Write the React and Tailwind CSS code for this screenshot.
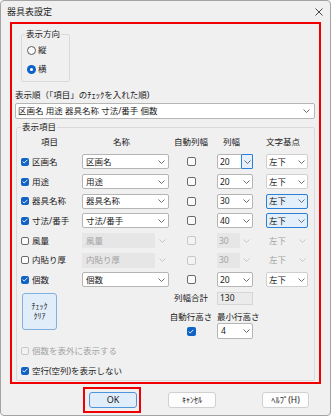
import React from "react";

function Chevron({ disabled }) {
  return (
    <svg width="7" height="4" viewBox="0 0 7 4" className="block">
      <polyline
        points="0.5,0.5 3.5,3.5 6.5,0.5"
        fill="none"
        stroke={disabled ? "#c2c2c2" : "#5f5f5f"}
        strokeWidth="0.9"
      />
    </svg>
  );
}

function Check({ checked, disabled, big }) {
  const size = big ? "w-[9px] h-[9px]" : "w-[8px] h-[8px]";
  if (checked) {
    return (
      <span className={`${size} shrink-0 rounded-[2px] bg-[#0f62c6] flex items-center justify-center`}>
        <svg width="6" height="5" viewBox="0 0 6 5" className="block">
          <polyline points="0.6,2.6 2.2,4 5.4,0.8" fill="none" stroke="#ffffff" strokeWidth="0.9" />
        </svg>
      </span>
    );
  }
  return (
    <span
      className={`${size} shrink-0 rounded-[2px] border ${
        disabled ? "border-[#c8c8c8] bg-[#f3f3f3]" : "border-[#6a6a6a] bg-[#fbfbfb]"
      }`}
    />
  );
}

function Radio({ checked }) {
  if (checked) {
    return (
      <span className="w-[9px] h-[9px] shrink-0 rounded-full bg-[#0f62c6] flex items-center justify-center">
        <span className="w-[3px] h-[3px] rounded-full bg-white" />
      </span>
    );
  }
  return <span className="w-[9px] h-[9px] shrink-0 rounded-full border border-[#5c5c5c] bg-[#fafafa]" />;
}

const rows = [
  { label: "区画名", on: true, name: "区画名", w: "20", base: "左下", wFocus: true },
  { label: "用途", on: true, name: "用途", w: "20", base: "左下" },
  { label: "器具名称", on: true, name: "器具名称", w: "30", base: "左下", baseHi: true },
  { label: "寸法/番手", on: true, name: "寸法/番手", w: "40", base: "左下", baseHi: true },
  { label: "風量", on: false, dis: true, name: "風量", w: "30", base: "左下" },
  { label: "内貼り厚", on: false, dis: true, name: "内貼り厚", w: "30", base: "左下" },
  { label: "個数", on: true, name: "個数", w: "20", base: "左下" },
];

function NameCombo({ r }) {
  if (r.dis) {
    return (
      <div className="w-[87px] h-[15px] flex items-stretch">
        <div className="flex-1 bg-[#e6e6e6] flex items-center pl-[4px] text-[#a3a3a3]">{r.name}</div>
        <div className="w-[14px] flex items-center justify-center">
          <Chevron disabled />
        </div>
      </div>
    );
  }
  return (
    <div className="w-[87px] h-[15px] bg-white border border-[#b5b5b5] rounded-[2px] flex items-center">
      <div className="flex-1 pl-[3px]">{r.name}</div>
      <div className="w-[13px] flex items-center justify-center">
        <Chevron />
      </div>
    </div>
  );
}

function WidthCombo({ r }) {
  if (r.dis) {
    return (
      <div className="ml-[4px] w-[36px] h-[15px] flex items-stretch">
        <div className="w-[23px] bg-[#e6e6e6] flex items-center pl-[2px] text-[#a3a3a3]">{r.w}</div>
        <div className="flex-1 flex items-center justify-center">
          <Chevron disabled />
        </div>
      </div>
    );
  }
  return (
    <div className="ml-[4px] w-[36px] h-[15px] bg-white border border-[#b5b5b5] rounded-[2px] flex items-stretch">
      <div className="flex-1 pl-[2px] flex items-center">{r.w}</div>
      {r.wFocus ? (
        <div className="w-[12px] -my-px -mr-px border border-[#2a7fd6] bg-[#e5f0fb] rounded-[1px] flex items-center justify-center">
          <Chevron />
        </div>
      ) : (
        <div className="w-[12px] flex items-center justify-center">
          <Chevron />
        </div>
      )}
    </div>
  );
}

function BaseCombo({ r }) {
  if (r.dis) {
    return (
      <div className="ml-[13px] w-[42px] h-[15px] flex items-center text-[#a3a3a3]">
        <div className="flex-1 pl-[3px]">{r.base}</div>
        <div className="w-[12px] flex items-center justify-center">
          <Chevron disabled />
        </div>
      </div>
    );
  }
  return (
    <div
      className={`ml-[13px] w-[42px] h-[15px] rounded-[2px] border flex items-center ${
        r.baseHi ? "bg-[#e3effb] border-[#2a7fd6]" : "bg-white border-[#cfcfcf]"
      }`}
    >
      <div className="flex-1 pl-[2px]">{r.base}</div>
      <div className="w-[12px] flex items-center justify-center">
        <Chevron />
      </div>
    </div>
  );
}

export default function App() {
  return (
    <div className="w-[332px] h-[420px] bg-white font-['Noto_Sans','Noto_Sans_CJK_JP',sans-serif] text-[8.5px] leading-[12px] text-[#1a1a1a]">
      <div className="w-[331px] h-[416px] border border-[#a3a3a3] rounded-[4px] bg-[#f0f0f0] flex flex-col">
        {/* title bar */}
        <div className="h-[21px] shrink-0 flex items-center justify-between pl-[6px] pr-[7px]">
          <span className="text-[9px]">器具表設定</span>
          <svg width="8" height="8" viewBox="0 0 8 8" className="block">
            <line x1="0.5" y1="0.5" x2="7.5" y2="7.5" stroke="#333" strokeWidth="0.9" />
            <line x1="7.5" y1="0.5" x2="0.5" y2="7.5" stroke="#333" strokeWidth="0.9" />
          </svg>
        </div>

        {/* red frame */}
        <div className="ml-[9px] w-[311px] h-[362px] shrink-0 border-2 border-[#f00000] flex flex-col">
          {/* 表示方向 */}
          <fieldset className="ml-[9px] mt-[4px] w-[49px] border border-[#d9d9d9] rounded-[2px] pb-[5px]">
            <legend className="ml-[3px] px-[1px] leading-[12px]">表示方向</legend>
            <div className="mt-[3px] h-[14px] flex items-center pl-[5px] gap-[2px]">
              <Radio />
              <span>縦</span>
            </div>
            <div className="mt-[5px] h-[14px] flex items-center pl-[5px] gap-[2px]">
              <Radio checked />
              <span>横</span>
            </div>
          </fieldset>

          <div className="mt-[7px] h-[12px] pl-[3px] whitespace-nowrap">表示順（「項目」のﾁｪｯｸを入れた順)</div>

          <div className="mt-[2px] ml-[3px] mr-[4px] h-[16px] bg-white border border-[#b5b5b5] rounded-[2px] flex items-center">
            <div className="flex-1 pl-[2px] whitespace-nowrap">区画名 用途 器具名称 寸法/番手 個数</div>
            <div className="w-[12px] flex items-center justify-center mr-[2px]">
              <Chevron />
            </div>
          </div>

          {/* 表示項目 */}
          <fieldset className="mt-[2px] mx-[4px] border border-[#d9d9d9] rounded-[2px] pb-[2px]">
            <legend className="ml-[4px] px-[1px] leading-[12px]">表示項目</legend>

            <div className="mt-[3px] h-[12px] flex items-center whitespace-nowrap">
              <div className="w-[65px] text-center">項目</div>
              <div className="w-[87px] pl-[31px]">名称</div>
              <div className="w-[44px] text-center">自動列幅</div>
              <div className="ml-[4px] w-[36px] pl-[6px]">列幅</div>
              <div className="ml-[13px] w-[42px]">文字基点</div>
            </div>

            <div className="mt-[4px] flex flex-col">
              {rows.map((r) => (
                <div key={r.label} className="h-[19.7px] flex items-center whitespace-nowrap">
                  <div className="w-[65px] flex items-center pl-[4px]">
                    <Check checked={r.on} />
                    <span className="ml-[3px]">{r.label}</span>
                  </div>
                  <NameCombo r={r} />
                  <div className="w-[44px] flex justify-center">
                    <Check big disabled={r.dis} />
                  </div>
                  <WidthCombo r={r} />
                  <BaseCombo r={r} />
                </div>
              ))}
            </div>

            {/* bottom area */}
            <div className="flex h-[49px]">
              <div className="w-[152px] pl-[5px] pt-[3px]">
                <div className="w-[35px] h-[37px] rounded-[3px] border border-[#7fb0e3] bg-[#e1eefa] flex flex-col items-center justify-center text-[8px] leading-[10.5px]">
                  <span>ﾁｪｯｸ</span>
                  <span>ｸﾘｱ</span>
                </div>
              </div>
              <div className="pt-[2px] flex flex-col whitespace-nowrap">
                <div className="h-[13px] flex items-center">
                  <div className="w-[44px] text-right pr-[5px]">列幅合計</div>
                  <div className="ml-[4px] w-[36px] h-[13px] bg-[#ebebeb] border border-[#d6d6d6] pl-[2px] flex items-center">
                    130
                  </div>
                </div>
                <div className="mt-[6px] h-[12px] flex items-center">
                  <div className="w-[44px] text-center">自動行高さ</div>
                  <div className="ml-[4px]">最小行高さ</div>
                </div>
                <div className="h-[16px] flex items-center">
                  <div className="w-[44px] flex justify-center pt-[1px]">
                    <Check big checked />
                  </div>
                  <div className="ml-[4px] w-[36px] h-[16px] bg-white border border-[#b5b5b5] rounded-[2px] flex items-center">
                    <div className="flex-1 pl-[3px]">4</div>
                    <div className="w-[12px] flex items-center justify-center">
                      <Chevron />
                    </div>
                  </div>
                </div>
              </div>
            </div>

            <div className="mt-[5px] h-[14px] flex items-center pl-[4px] whitespace-nowrap">
              <Check disabled />
              <span className="ml-[3px] text-[#a3a3a3]">個数を表外に表示する</span>
            </div>
            <div className="mt-[6px] h-[14px] flex items-center pl-[4px] whitespace-nowrap">
              <Check checked />
              <span className="ml-[3px]">空行(空列)を表示しない</span>
            </div>
          </fieldset>
        </div>

        {/* buttons */}
        <div className="mt-[3px] h-[26px] flex items-center">
          <div className="ml-[82px] w-[58px] h-[26px] border-2 border-[#f00000] flex items-center">
            <div className="ml-[4px] w-[48px] h-[16px] rounded-[3px] border border-[#4f95dd] bg-[#e0edfa] flex items-center justify-center text-[9px]">
              OK
            </div>
          </div>
          <div className="ml-[27px] w-[48px] h-[16px] rounded-[3px] border border-[#d0d0d0] bg-[#fdfdfd] flex items-center justify-center text-[8px]">
            ｷｬﾝｾﾙ
          </div>
          <div className="ml-[46px] w-[47px] h-[16px] rounded-[3px] border border-[#d0d0d0] bg-[#fdfdfd] flex items-center justify-center text-[8.5px]">
            ﾍﾙﾌﾟ(H)
          </div>
        </div>
      </div>
    </div>
  );
}
